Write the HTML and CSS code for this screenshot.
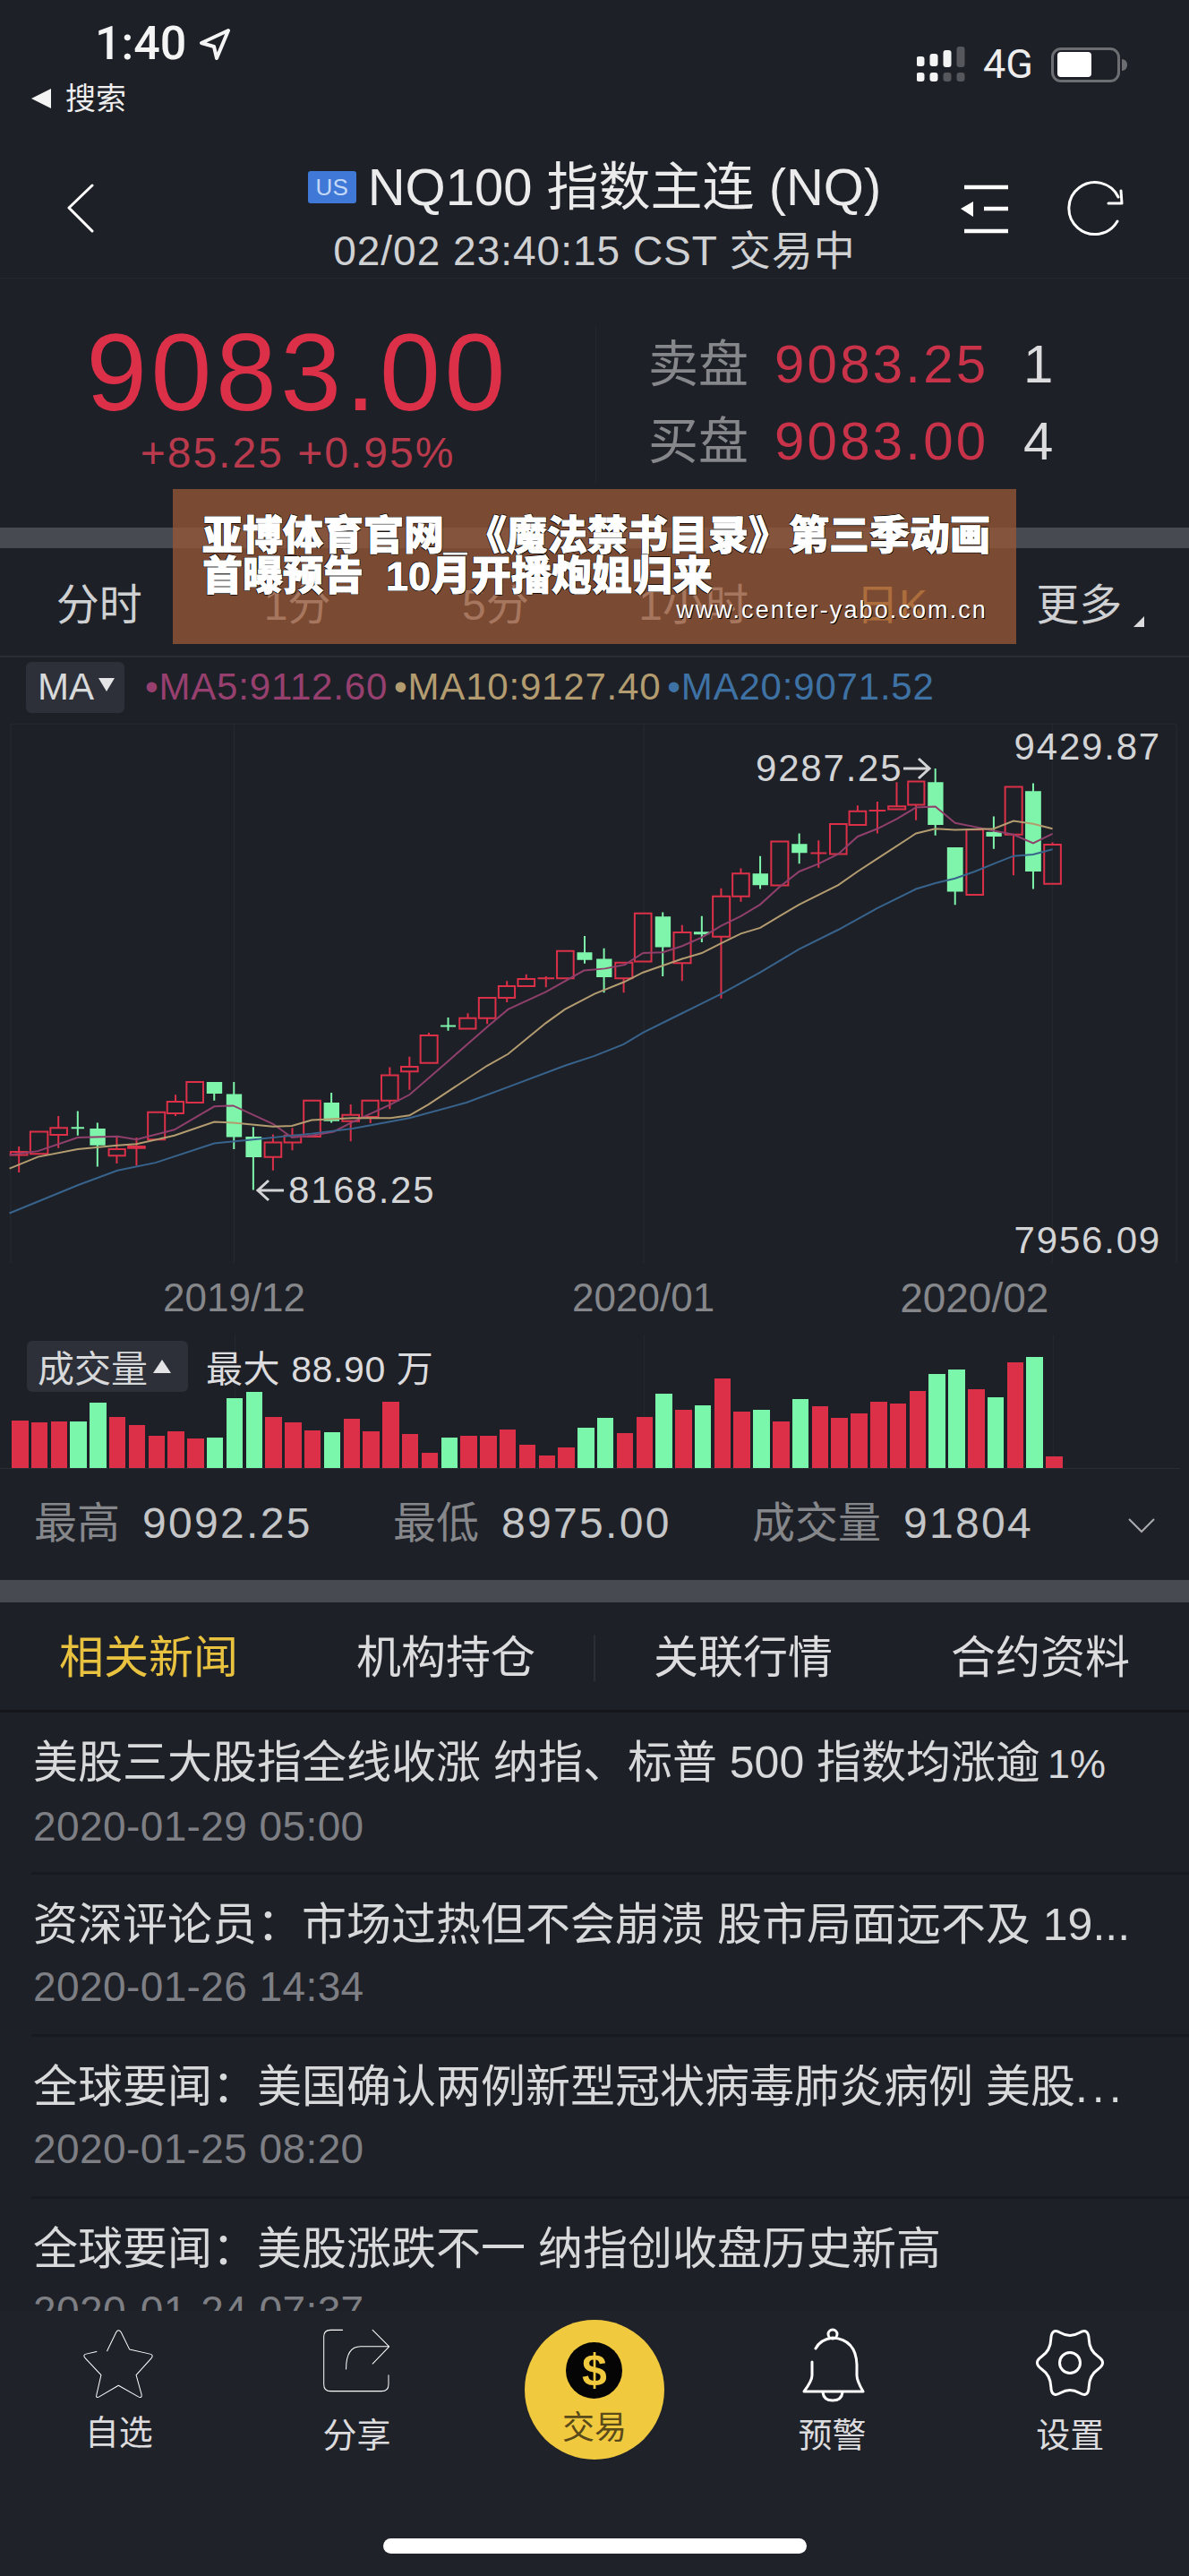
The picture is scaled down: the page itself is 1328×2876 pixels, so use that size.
FILE: index.html
```html
<!DOCTYPE html>
<html lang="zh">
<head>
  <meta charset="UTF-8">
  <meta name="viewport" content="width=device-width, initial-scale=1.0">
  <title>NQ100 指数主连</title>
  <link rel="stylesheet" href="styles.css">
</head>
<body>
  <div class="status">
    <div>
      <div class="clock">
        1:40
        <svg class="loc" width="36" height="36" viewBox="225 31 36 36"><path d="M258 34L228 48L242 52L245 65Z"/></svg>
      </div>
      <div class="backapp"><span class="tri-left"></span>搜索</div>
    </div>
    <div class="sysicons">
      <svg width="60" height="44" viewBox="1025 50 60 44">
        <g fill="#f4f4f5">
          <rect x="1024.500" y="63" width="9" height="11" rx="3"/>
          <rect x="1039.500" y="60" width="9" height="14" rx="3"/>
          <rect x="1054.500" y="56" width="9" height="19" rx="3"/>
          <rect x="1024.500" y="81" width="9" height="10" rx="3"/>
          <rect x="1039.500" y="81" width="9" height="10" rx="3"/>
        </g>
        <g fill="#55575c">
          <rect x="1069.500" y="52" width="9" height="23" rx="3"/>
          <rect x="1054.500" y="81" width="9" height="10" rx="3"/>
          <rect x="1069.500" y="81" width="9" height="10" rx="3"/>
        </g>
      </svg>
      <span class="net">4G</span>
      <div class="battery"><div class="level"></div></div>
      <div class="nub"></div>
    </div>
  </div>

  <div class="titlebar">
    <div class="tb-left">
      <svg width="30" height="56" viewBox="75 205 30 56"><path class="line" d="M103 207L77 232L103 258"/></svg>
    </div>
    <div class="tb-center">
      <div class="name"><span class="flag">US</span>NQ100 指数主连 (NQ)</div>
      <div class="sub">02/02 23:40:15 CST 交易中</div>
    </div>
    <div class="tb-right">
      <svg width="56" height="56" viewBox="1072 205 56 56">
        <path class="line thick" d="M1077 209H1126M1099 233H1126M1077 258H1126"/>
        <path fill="#fff" d="M1073 233L1087 225V242Z"/>
      </svg>
      <svg width="66" height="66" viewBox="1191 201 66 66">
        <path class="line" d="M1248 247A29 29 0 1 1 1249 220"/>
        <path class="line" d="M1238 227H1253L1252 213"/>
      </svg>
    </div>
  </div>

  <div class="quote">
    <div class="q-main">
      <div class="price">9083.00</div>
      <div class="change">+85.25 +0.95%</div>
    </div>
    <div class="q-book">
      <div class="book-row"><span class="b-label">卖盘</span><span class="b-price">9083.25</span><span>1</span></div>
      <div class="book-row"><span class="b-label">买盘</span><span class="b-price">9083.00</span><span>4</span></div>
    </div>
  </div>

  <div class="band"></div>

  <div class="periods">
    <span>分时</span><span>1分</span><span>5分</span><span>1小时</span><span class="on">日K</span>
    <span class="more">更多<i class="corner"></i></span>
  </div>

  <div class="ma-row">
    <div class="ma-btn">MA<i class="tri-down"></i></div>
    <div class="legend">
      <span class="ma5">•MA5:9112.60</span>
      <span class="ma10">•MA10:9127.40</span>
      <span class="ma20">•MA20:9071.52</span>
    </div>
  </div>

  <div class="chart">
    <svg class="plot" width="1328" height="610" viewBox="0 161 3136 1407" preserveAspectRatio="none">
      <path class="grid" d="M28 180V1568M617 180V1568M1698 180V1568M2776 180V1568M3103 180V1568M28 180H3103"/>
      <!-- up candles: hollow red -->
      <path class="up" d="M50 1268V1335M28 1282H72V1290H28ZM80 1230H126V1287H80ZM154 1190V1220M154 1238V1272M133 1220H177V1238H133ZM308 1245V1275M308 1292V1312M287 1275H330V1292H287ZM360 1245V1318M338 1268H382V1272H338ZM390 1180H435V1250H390ZM463 1135V1153M463 1183V1190M441 1153H484V1183H441ZM492 1102H536V1155H492ZM720 1237V1258M720 1295V1330M698 1258H742V1295H698ZM771 1220V1240M771 1258V1278M750 1240H794V1258H750ZM801 1150H845V1243H801ZM925 1160V1187M925 1203V1255M903 1187H947V1203H903ZM977 1192V1208M955 1150H998V1192H955ZM1028 1064V1085M1028 1150V1172M1006 1085H1050V1150H1006ZM1080 1037V1063M1080 1075V1122M1058 1063H1102V1075H1058ZM1131 975V982M1109 982H1154V1053H1109ZM1234 925V938M1212 938H1255V965H1212ZM1285 938V953M1263 885H1307V938H1263ZM1337 842V855M1337 885V897M1315 855H1358V885H1315ZM1388 825V837M1366 837H1410V855H1366ZM1440 830V858M1418 835H1462M1469 765H1513V835H1469ZM1645 835V872M1623 795H1668V835H1623ZM1674 668H1718V792H1674ZM1799 698V717M1799 796V842M1777 717H1822V796H1777ZM1902 603V624M1902 728V887M1880 624H1925V728H1880ZM1954 552V565M1954 624V638M1932 565H1976V624H1932ZM2034 483H2079V596H2034ZM2159 480V550M2138 513H2180M2189 438H2233V515H2189ZM2262 390V405M2240 405H2284V440H2240ZM2314 380V462M2292 403H2336M2365 330V392M2343 392H2388V400H2343ZM2416 388V428M2395 328H2438V388H2395ZM2549 452H2593V620H2549ZM2673 465V570M2651 342H2696V465H2651ZM2776 485V491M2754 491H2798V592H2754Z"/>
      <!-- down candles: solid green -->
      <path class="down-wick" d="M205 1177V1240M188 1220H222M257 1207V1320M565 1132V1150M617 1102V1275M668 1218V1380M874 1130V1207M1182 936V970M1162 958H1202M1542 726V797M1593 758V872M1748 665V830M1851 675V742M2005 520V605M2108 462V540M2467 295V467M2519 498V646M2621 418V502M2725 333V605"/>
      <path class="down-body" d="M237 1222H278V1265H237ZM545 1102H586V1132H545ZM597 1133H638V1244H597ZM648 1243H690V1296H648ZM854 1155H895V1203H854ZM1522 768H1562V788H1522ZM1573 785H1614V832H1573ZM1728 676H1769V755H1728ZM1830 715H1871V722H1830ZM1985 565H2026V595H1985ZM2088 489H2129V512H2088ZM2447 330H2488V440H2447ZM2498 498H2540V612H2498ZM2601 458H2642V470H2601ZM2704 353H2746V560H2704Z"/>
      <polyline class="ma ln5" points="25,1290 100,1280 205,1245 310,1242 360,1250 460,1225 565,1165 615,1163 720,1210 770,1245 822,1240 880,1230 930,1205 1030,1160 1080,1135 1180,1050 1285,960 1340,915 1440,870 1540,815 1596,810 1648,800 1696,770 1748,768 1799,752 1851,730 1902,700 1954,675 2005,645 2056,600 2108,560 2159,540 2211,515 2262,470 2314,450 2365,425 2416,395 2467,393 2519,435 2571,445 2621,455 2673,465 2725,487 2776,463"/>
      <polyline class="ma ln10" points="25,1325 100,1295 205,1275 310,1265 360,1262 460,1240 565,1205 615,1207 720,1217 770,1215 822,1200 930,1195 1030,1195 1080,1188 1130,1160 1285,1060 1340,1030 1440,950 1490,915 1568,875 1645,845 1696,820 1799,785 1851,770 1902,745 1954,720 2005,705 2056,675 2108,645 2211,595 2262,560 2314,527 2416,462 2467,450 2519,453 2621,450 2673,430 2725,437 2776,450"/>
      <polyline class="ma ln20" points="25,1440 100,1410 205,1368 310,1330 410,1310 565,1260 668,1250 822,1235 930,1222 1080,1195 1230,1155 1340,1115 1490,1060 1568,1035 1645,1005 1696,975 1799,925 1851,900 1902,875 2005,820 2108,760 2211,710 2313,655 2416,605 2467,590 2519,578 2571,560 2621,540 2673,520 2725,516 2776,503"/>
    </svg>
    <span class="tag hi">9429.87</span>
    <span class="tag peak">9287.25<svg class="arrow" width="32" height="26" viewBox="0 0 32 26"><path d="M1 13H30M18 2L30 13L18 24"/></svg></span>
    <span class="tag lo">7956.09</span>
    <span class="tag trough"><svg class="arrow" width="32" height="26" viewBox="0 0 32 26"><path d="M31 13H2M14 2L2 13L14 24"/></svg>8168.25</span>
  </div>

  <div class="dates"><span>2019/12</span><span>2020/01</span><span>2020/02</span></div>

  <div class="volume">
    <div class="vol-label">
      <div class="vol-btn">成交量<i class="tri-up"></i></div>
      <span class="vol-max">最大 88.90 万</span>
    </div>
    <div class="bars">
      <i class="r" style="height:53px"></i><i class="r" style="height:51px"></i><i class="r" style="height:52px"></i><i class="g" style="height:52px"></i><i class="g" style="height:73px"></i><i class="r" style="height:57px"></i><i class="r" style="height:48px"></i><i class="r" style="height:36px"></i><i class="r" style="height:41px"></i><i class="r" style="height:33px"></i><i class="g" style="height:34px"></i><i class="g" style="height:78px"></i><i class="g" style="height:85px"></i><i class="r" style="height:57px"></i><i class="r" style="height:51px"></i><i class="r" style="height:42px"></i><i class="g" style="height:40px"></i><i class="r" style="height:55px"></i><i class="r" style="height:41px"></i><i class="r" style="height:74px"></i><i class="r" style="height:38px"></i><i class="r" style="height:17px"></i><i class="g" style="height:34px"></i><i class="r" style="height:36px"></i><i class="r" style="height:36px"></i><i class="r" style="height:43px"></i><i class="r" style="height:26px"></i><i class="r" style="height:14px"></i><i class="r" style="height:23px"></i><i class="g" style="height:45px"></i><i class="g" style="height:56px"></i><i class="r" style="height:39px"></i><i class="r" style="height:57px"></i><i class="g" style="height:83px"></i><i class="r" style="height:65px"></i><i class="g" style="height:70px"></i><i class="r" style="height:100px"></i><i class="r" style="height:63px"></i><i class="g" style="height:65px"></i><i class="r" style="height:52px"></i><i class="g" style="height:77px"></i><i class="r" style="height:69px"></i><i class="r" style="height:56px"></i><i class="r" style="height:61px"></i><i class="r" style="height:74px"></i><i class="r" style="height:72px"></i><i class="r" style="height:86px"></i><i class="g" style="height:105px"></i><i class="g" style="height:110px"></i><i class="r" style="height:88px"></i><i class="g" style="height:79px"></i><i class="r" style="height:118px"></i><i class="g" style="height:124px"></i><i class="r" style="height:13px"></i>
    </div>
  </div>

  <div class="stats">
    <div class="stat"><span class="s-label">最高</span><span class="s-val">9092.25</span></div>
    <div class="stat"><span class="s-label">最低</span><span class="s-val">8975.00</span></div>
    <div class="stat"><span class="s-label">成交量</span><span class="s-val">91804</span></div>
    <svg class="chev" width="32" height="18" viewBox="0 0 32 18"><path d="M2 2L16 16L30 2"/></svg>
  </div>

  <div class="band wide"></div>

  <div class="tabs">
    <span class="active">相关新闻</span>
    <span>机构持仓</span>
    <span>关联行情</span>
    <span>合约资料</span>
    <i class="tab-split"></i>
  </div>

  <div class="news">
    <div class="item">
      <p class="headline">美股三大股指全线收涨 纳指、标普 500 指数均涨逾 <span class="pct">1%</span></p>
      <p class="when">2020-01-29 05:00</p>
    </div>
    <div class="item">
      <p class="headline">资深评论员：市场过热但不会崩溃 股市局面远不及 19...</p>
      <p class="when">2020-01-26 14:34</p>
    </div>
    <div class="item">
      <p class="headline">全球要闻：美国确认两例新型冠状病毒肺炎病例 美股<span class="dots">...</span></p>
      <p class="when">2020-01-25 08:20</p>
    </div>
    <div class="item">
      <p class="headline">全球要闻：美股涨跌不一 纳指创收盘历史新高</p>
      <p class="when">2020-01-24 07:37</p>
    </div>
  </div>

  <div class="nav">
    <div class="nav-items">
      <div class="nav-item">
        <div class="nav-icon">
          <svg width="84" height="82" viewBox="90 80 250 245"><path class="line" d="M175 160L205 98Q213 85 222 98L250 155L318 170Q332 173 322 185L272 240L290 305Q292 320 278 312L213 275L150 312Q136 320 140 305L155 240L103 185Q92 173 105 170L140 162" stroke-width="9"/></svg>
        </div>
        <span>自选</span>
      </div>
      <div class="nav-item">
        <div class="nav-icon">
          <svg width="78" height="76" viewBox="900 90 232 226"><path class="line" d="M970 100H930Q908 100 908 122V280Q908 303 930 303H1100Q1123 303 1123 280V250M1070 100L1125 155L1070 212M1125 155H1030Q982 155 982 230" stroke-width="9"/></svg>
        </div>
        <span class="low">分享</span>
      </div>
      <div class="nav-item">
        <div class="trade">
          <div class="coin">$</div>
          <span>交易</span>
        </div>
      </div>
      <div class="nav-item">
        <div class="nav-icon">
          <svg width="72" height="84" viewBox="892 2596 72 84"><path class="line" d="M909 2620Q914 2610 928 2608Q954 2610 955 2638V2650Q955 2656 962 2668H896Q905 2656 905 2650V2635M917 2669Q918 2678 928 2678Q938 2678 939 2669"/><circle class="line" cx="928" cy="2604" r="5"/></svg>
        </div>
        <span class="low">预警</span>
      </div>
      <div class="nav-item">
        <div class="nav-icon">
          <svg width="80" height="80" viewBox="-4 -4 80 80"><path class="line" d="M67.600 29.100Q57.650 22.250 57.200 9.400Q56.750 -3.500 46.400 2.500Q36 8.500 25.600 2.500Q15.250 -3.500 14.800 9.400Q14.350 22.250 4.400 29.100Q-5.500 36 4.400 42.900Q14.350 49.750 14.800 62.600Q15.250 75.500 25.600 69.500Q36 63.500 46.400 69.500Q56.750 75.500 57.200 62.600Q57.650 49.750 67.600 42.900Q77.500 36 67.600 29.100Z"/><circle class="line" cx="36" cy="36" r="11.500"/></svg>
        </div>
        <span class="low">设置</span>
      </div>
    </div>
    <div class="homebar"></div>
  </div>

  <div class="banner">
    <h1>亚博体育官网_《魔法禁书目录》第三季动画<br>首曝预告&nbsp; 10月开播炮姐归来</h1>
    <div class="site">www.center-yabo.com.cn</div>
  </div>
</body>
</html>
```

FILE: styles.css
```css
* {
  margin: 0;
  padding: 0;
  box-sizing: border-box;
}

body {
  font-family: "Liberation Sans", "Noto Sans CJK SC", sans-serif;
  background-color: #1e2027;
  color: #d8d9da;
  width: 1328px;
  height: 2876px;
  overflow: hidden;
  position: relative;
  display: flex;
  flex-direction: column;
}

i {
  display: block;
}

.line {
  fill: none;
  stroke: #fff;
  stroke-width: 3;
  stroke-linecap: round;
  stroke-linejoin: round;
}

.line.thick {
  stroke-width: 4.5;
  stroke-linecap: butt;
}

/* status bar */
.status {
  height: 170px;
  display: flex;
  justify-content: space-between;
}

.clock {
  padding: 23px 0 0 106px;
  font-family: Roboto, sans-serif;
  font-weight: 500;
  font-size: 52px;
  line-height: 52px;
  color: #f4f4f5;
  display: flex;
  align-items: center;
  gap: 14px;
}

.loc path {
  fill: none;
  stroke: #f4f4f5;
  stroke-width: 4;
  stroke-linejoin: round;
}

.backapp {
  margin-top: 15px;
  padding-left: 35px;
  font-size: 34px;
  line-height: 40px;
  color: #eee;
  display: flex;
  align-items: center;
}

.tri-left {
  width: 0;
  height: 0;
  border-style: solid;
  border-width: 11px 22px 11px 0;
  border-color: transparent #f4f4f5 transparent transparent;
  margin-right: 16px;
}

.sysicons {
  display: flex;
  align-items: flex-start;
  padding: 50px 69px 0 0;
}

.net {
  font-family: Roboto, sans-serif;
  font-size: 45px;
  line-height: 44px;
  margin: 0 20px 0 14px;
  color: #eee;
}

.battery {
  width: 77px;
  height: 39px;
  margin-top: 3px;
  border: 3px solid #6c6e72;
  border-radius: 11px;
  padding: 2px 4px;
}

.level {
  width: 38px;
  height: 28px;
  background-color: #fff;
  border-radius: 4px;
}

.nub {
  width: 6px;
  height: 13px;
  margin: 16px 0 0 2px;
  background-color: #6c6e72;
  border-radius: 0 6px 6px 0;
}

/* title */
.titlebar {
  height: 141px;
  display: flex;
  border-bottom: 1px solid #25272e;
}

.tb-left {
  width: 270px;
  padding: 35px 0 0 75px;
}

.tb-center {
  flex: 1;
  text-align: center;
  padding-top: 7px;
}

.tb-right {
  width: 270px;
  padding: 31px 71px 0 0;
  display: flex;
  justify-content: flex-end;
  align-items: flex-start;
  gap: 63px;
}

.tb-right svg:first-child {
  margin-top: 4px;
}

.name {
  font-size: 58px;
  line-height: 64px;
  color: #ebebec;
  white-space: nowrap;
  display: flex;
  justify-content: center;
  align-items: center;
}

.flag {
  width: 54px;
  height: 36px;
  margin-right: 13px;
  background-color: #3f78d6;
  color: #c3d8f6;
  border-radius: 3px;
  font-size: 26px;
  line-height: 36px;
  text-align: center;
}

.sub {
  margin-top: 9px;
  font-size: 46px;
  line-height: 60px;
  letter-spacing: 1px;
  color: #d0d1d3;
  white-space: nowrap;
}

/* quote */
.quote {
  height: 278px;
  display: flex;
}

.q-main {
  width: 665px;
  padding-top: 40px;
  text-align: center;
}

.price {
  font-size: 122px;
  line-height: 130px;
  letter-spacing: 4.500px;
  color: #dc3049;
}

.change {
  font-size: 48px;
  line-height: 50px;
  letter-spacing: 2px;
  color: #b93a4d;
}

.q-book {
  margin: 52px 0 49px;
  padding: 1px 0 0 58px;
  border-left: 1px solid #25272e;
}

.book-row {
  display: flex;
  font-size: 60px;
  line-height: 86px;
  color: #dcdcde;
}

.b-label {
  width: 141px;
  font-size: 56px;
  color: #85878b;
}

.b-price {
  width: 278px;
  letter-spacing: 3.200px;
  color: #c8334a;
}

.band {
  height: 23px;
  background-color: #474a50;
}

.band.wide {
  height: 25px;
}

/* period tabs */
.periods {
  height: 122px;
  display: grid;
  grid-template-columns: repeat(6, 1fr);
  align-items: center;
  text-align: center;
  font-size: 48px;
  color: #cfd0d2;
  border-bottom: 2px solid #2b2d34;
  padding-bottom: 2px;
}

.periods .on {
  color: #e0ae4c;
}

.more {
  position: relative;
  margin-left: -24px;
}

.corner {
  position: absolute;
  left: 183px;
  bottom: 6px;
  width: 0;
  height: 0;
  border-style: solid;
  border-width: 0 0 12px 12px;
  border-color: transparent transparent #dcdcde transparent;
}

/* MA legend */
.ma-row {
  height: 66px;
  display: flex;
  align-items: center;
  padding-left: 29px;
  gap: 23px;
}

.ma-btn {
  width: 110px;
  height: 57px;
  background-color: #2d3039;
  border-radius: 6px;
  font-size: 42px;
  color: #d8d9da;
  display: flex;
  align-items: center;
  padding-left: 13px;
  gap: 5px;
}

.tri-down {
  width: 0;
  height: 0;
  border-style: solid;
  border-width: 15px 9px 0 9px;
  border-color: #e4e4e6 transparent transparent transparent;
  margin-bottom: 6px;
}

.legend {
  display: flex;
  gap: 7px;
  font-size: 42px;
  letter-spacing: 0.800px;
  white-space: nowrap;
}

.ma5 { color: #97406f; }
.ma10 { color: #b39c70; }
.ma20 { color: #3e72a4; }

/* kline chart */
.chart {
  height: 610px;
  position: relative;
}

.plot {
  display: block;
}

.plot path,
.plot polyline {
  vector-effect: non-scaling-stroke;
  fill: none;
}

.grid {
  stroke: #25272e;
  stroke-width: 1.5;
}

.up {
  stroke: #dc3049;
  stroke-width: 2;
}

.down-wick {
  stroke: #7ef5ab;
  stroke-width: 2;
}

.plot .down-body {
  fill: #7ef5ab;
}

.ma {
  stroke-width: 2;
}

.ln5 { stroke: #8f3f6b; }
.ln10 { stroke: #b39c70; }
.ln20 { stroke: #37638c; }

.tag {
  position: absolute;
  display: flex;
  align-items: center;
  font-size: 42px;
  line-height: 42px;
  letter-spacing: 1.800px;
  color: #d3d4d6;
  white-space: nowrap;
}

.arrow path {
  fill: none;
  stroke: #d3d4d6;
  stroke-width: 3;
}

.hi { right: 31px; top: 13px; }
.peak { left: 844px; top: 37px; }
.lo { right: 31px; top: 564px; }
.trough { left: 286px; top: 508px; gap: 4px; }

.dates {
  height: 80px;
  padding: 12px 0 0 182px;
  display: flex;
  gap: 298px;
  font-size: 44px;
  line-height: 54px;
  color: #85878b;
}

.dates span:last-child {
  margin-left: -91px;
  font-size: 46px;
}

/* volume */
.volume {
  height: 150px;
  position: relative;
}

.vol-label {
  position: absolute;
  left: 30px;
  top: 5px;
  display: flex;
  align-items: center;
  gap: 20px;
  font-size: 41px;
  color: #dcdcde;
  white-space: nowrap;
}

.vol-max {
  letter-spacing: 0.600px;
}

.vol-btn {
  width: 180px;
  height: 57px;
  background-color: #2d3039;
  border-radius: 6px;
  padding-left: 12px;
  display: flex;
  align-items: center;
  gap: 6px;
  color: #d8d9da;
}

.tri-up {
  width: 0;
  height: 0;
  border-style: solid;
  border-width: 0 10px 15px 10px;
  border-color: transparent transparent #e4e4e6 transparent;
}

.bars {
  height: 150px;
  padding-left: 13px;
  display: flex;
  align-items: flex-end;
  gap: 3.300px;
  border-bottom: 1px solid #2b2d34;
  margin-right: 10px;
  background-image: linear-gradient(#25272e, #25272e), linear-gradient(#25272e, #25272e), linear-gradient(#25272e, #25272e);
  background-size: 1px 100%;
  background-position: 262px 0, 719px 0, 1176px 0;
  background-repeat: no-repeat;
}

.bars i {
  width: 18.500px;
}

.bars .r { background-color: #dc3049; }
.bars .g { background-color: #7bf7ab; }

/* day stats */
.stats {
  height: 124px;
  display: flex;
  align-items: center;
  padding: 0 0 13px 38px;
  position: relative;
  font-size: 48px;
}

.stat {
  width: 401px;
  display: flex;
  align-items: baseline;
  gap: 25px;
}

.s-label {
  color: #85878b;
}

.s-val {
  color: #c5c6c8;
  letter-spacing: 2.300px;
}

.chev {
  position: absolute;
  right: 37px;
  top: 54px;
}

.chev path {
  fill: none;
  stroke: #a9abae;
  stroke-width: 2;
}

/* detail tabs */
.tabs {
  height: 123px;
  position: relative;
  display: grid;
  grid-template-columns: repeat(4, 1fr);
  align-items: center;
  text-align: center;
  font-size: 50px;
  line-height: 60px;
  color: #dcdcde;
  border-bottom: 3px solid #15161b;
  padding-top: 4px;
}

.tabs .active {
  color: #e9c33f;
}

.tab-split {
  position: absolute;
  left: 663px;
  top: 36px;
  width: 2px;
  height: 52px;
  background-color: #2b2d34;
}

/* news */
.news {
  flex: 1;
  overflow: hidden;
}

.item {
  height: 181px;
  margin-left: 35px;
  padding: 26px 0 0 2px;
  border-bottom: 3px solid #191a20;
}

.headline {
  font-size: 50px;
  line-height: 60px;
  color: #d8d9da;
  white-space: nowrap;
}

.pct {
  font-size: 45px;
  margin-left: -6px;
}

.dots {
  letter-spacing: 5px;
}

.when {
  margin-top: 9px;
  font-size: 46px;
  line-height: 60px;
  letter-spacing: 0.400px;
  color: #7d7f84;
}

/* bottom nav */
.nav {
  height: 296px;
  background-color: #20222a;
  display: flex;
  flex-direction: column;
}

.nav-items {
  display: grid;
  grid-template-columns: repeat(5, 1fr);
  padding-top: 10px;
}

.nav-item {
  display: flex;
  flex-direction: column;
  align-items: center;
  font-size: 38px;
  line-height: 52px;
  color: #dcdcde;
}

.nav-item .low {
  margin-top: 3px;
}

.nav-icon {
  height: 90px;
  margin-top: 8px;
  margin-bottom: 2px;
  display: flex;
  align-items: flex-start;
}

.trade {
  width: 156px;
  height: 156px;
  border-radius: 50%;
  background-color: #f0c93e;
  color: #5a4a1a;
  font-size: 36px;
  display: flex;
  flex-direction: column;
  align-items: center;
  padding-top: 25px;
}

.coin {
  width: 63px;
  height: 63px;
  border-radius: 50%;
  background-color: #050505;
  color: #f0c93e;
  font-size: 50px;
  font-weight: bold;
  line-height: 63px;
  text-align: center;
  margin-bottom: 7px;
}

.homebar {
  width: 473px;
  height: 17px;
  margin: auto auto 25px;
  background-color: #fff;
  border-radius: 9px;
}

/* promo banner over the page */
.banner {
  position: absolute;
  left: 193px;
  top: 546px;
  width: 942px;
  height: 173px;
  padding: 30px 32px 0 33px;
  background-color: rgba(153, 88, 55, 0.75);
}

.banner h1 {
  font-size: 45px;
  line-height: 45px;
  font-weight: 900;
  color: #fff;
  white-space: nowrap;
  -webkit-text-stroke: 1px #fff;
  text-shadow: 1px 1px 0 #000, -1px -1px 0 #000, 1px -1px 0 #000, -1px 1px 0 #000;
}

.site {
  text-align: right;
  font-size: 27px;
  line-height: 30px;
  letter-spacing: 2.100px;
  color: #fff;
  text-shadow: 1px 1px 0 #000;
}
```
